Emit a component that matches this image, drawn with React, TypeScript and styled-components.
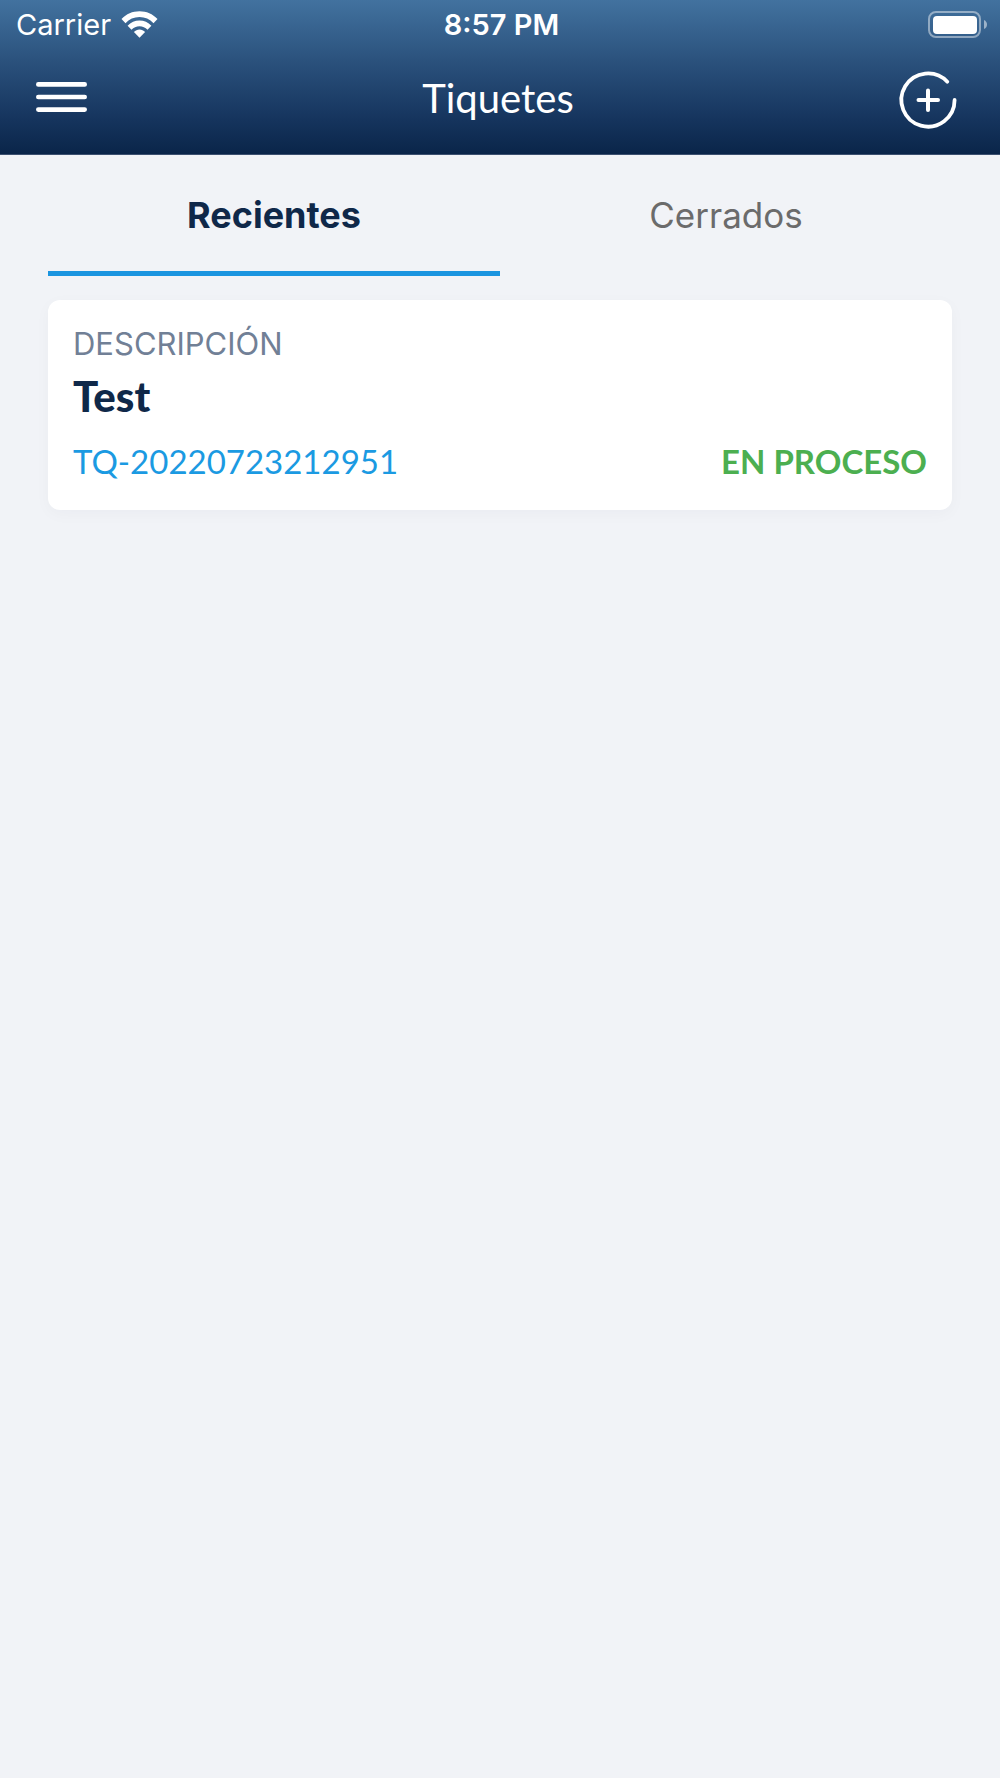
import React, { useState } from "react";
import styled, { createGlobalStyle } from "styled-components";

const system = `Inter, "Liberation Sans", sans-serif`;
const brand = `Lato, "Open Sans", sans-serif`;

const GlobalStyle = createGlobalStyle`
  *, *::before, *::after { box-sizing: border-box; }
  body {
    margin: 0;
    background: #f1f3f7;
    font-family: ${system};
  }
  button {
    margin: 0;
    padding: 0;
    border: 0;
    background: none;
    font: inherit;
    color: inherit;
    cursor: pointer;
  }
`;

const Screen = styled.div`
  min-height: 100vh;
  background: #f1f3f7;
`;

const Header = styled.header`
  color: #fff;
  background: linear-gradient(#42729f 0%, #2b527d 39%, #15345d 78%, #0a2549 100%);
  border-bottom: 1px solid #3c5070;
`;

const ThreeColumns = styled.div`
  display: grid;
  grid-template-columns: 1fr auto 1fr;
  align-items: center;
`;

const StatusBar = styled(ThreeColumns)`
  height: 50px;
  padding: 0 13px 0 16px;
  font-size: 29px;
  line-height: 36px;
`;

const NavBar = styled(ThreeColumns)`
  height: 104px;
  padding: 0 40px 4px 36px;
`;

const Slot = styled.div<{ $end?: boolean }>`
  display: flex;
  align-items: center;
  gap: 10px;
  justify-content: ${(p) => (p.$end ? "flex-end" : "flex-start")};
`;

const Time = styled.time`
  font-weight: 600;
`;

const Title = styled.h1`
  margin: 0;
  padding-bottom: 4px;
  font-family: ${brand};
  font-size: 40px;
  font-weight: 400;
  line-height: 48px;
`;

const IconButton = styled.button`
  display: flex;
  align-items: center;
  justify-content: center;
`;

const Icon = styled.svg`
  display: block;
  flex: none;
`;

const Content = styled.main`
  padding: 0 48px;
`;

const Tabs = styled.div`
  display: flex;
  margin-bottom: 24px;
`;

const Tab = styled.button<{ $active: boolean }>`
  flex: 1;
  height: 121px;
  padding-top: 3px;
  border-bottom: 5px solid ${(p) => (p.$active ? "#1b95e0" : "transparent")};
  color: ${(p) => (p.$active ? "#0f2849" : "#6b6b6b")};
  font-size: ${(p) => (p.$active ? 36 : 35)}px;
  font-weight: ${(p) => (p.$active ? 700 : 400)};
  line-height: 44px;
`;

const Card = styled.article`
  padding: 24px 25px;
  border-radius: 12px;
  background: #fff;
  box-shadow: 0 4px 16px rgba(20, 30, 60, 0.03);
`;

const Label = styled.p`
  margin: 0;
  color: #718096;
  font-size: 31px;
  line-height: 40px;
`;

const Description = styled.h2`
  margin: 8px 0 16px;
  color: #0f2849;
  font-family: ${brand};
  font-size: 42px;
  font-weight: 900;
  line-height: 48px;
`;

const CardFooter = styled.div`
  display: flex;
  align-items: baseline;
  justify-content: space-between;
  font-family: ${brand};
  font-size: 33px;
  line-height: 50px;
`;

const TicketNumber = styled.span`
  color: #1b9ae2;
`;

const Status = styled.span`
  color: #4caf50;
  font-weight: 700;
`;

const WifiIcon = () => (
  <Icon width="37" height="28" viewBox="0 0 37 28" fill="#fff" aria-hidden="true">
    <path d="M0.5 8C5.3 2.900 11.500 0.200 18.500 0.200S31.700 2.900 36.500 8L32.500 12.200C28.800 8.300 24 6.100 18.500 6.100S8.200 8.300 4.500 12.200Z" />
    <path d="M6.600 14.700C9.800 11.400 14 9.500 18.500 9.500S27.200 11.400 30.400 14.700L26.500 18.700C24.400 16.500 21.600 15.300 18.500 15.300S12.600 16.500 10.500 18.700Z" />
    <path d="M12.900 21C14.400 19.400 16.400 18.500 18.500 18.500S22.600 19.400 24.100 21L18.500 26.700Z" />
  </Icon>
);

const BatteryIcon = () => (
  <Icon width="59" height="28" viewBox="0 0 59 28" aria-hidden="true">
    <rect x="1" y="1" width="51" height="25" rx="7" fill="none" stroke="#fff" strokeOpacity="0.45" strokeWidth="2" />
    <rect x="5" y="5" width="44" height="18" rx="4" fill="#fff" />
    <path d="M56 9C58 10 59 11.500 59 13.500S58 17 56 18Z" fill="#fff" fillOpacity="0.5" />
  </Icon>
);

const MenuIcon = () => (
  <Icon width="51" height="38" viewBox="0 0 51 38" stroke="#fff" strokeWidth="4.600" strokeLinecap="round" aria-hidden="true">
    <path d="M2.300 3.400H48.700M2.300 16H48.700M2.300 28.600H48.700" />
  </Icon>
);

const AddIcon = () => (
  <Icon width="64" height="64" viewBox="0 0 64 64" fill="none" stroke="#fff" strokeWidth="3.800" strokeLinecap="round" aria-hidden="true">
    <path d="M58.600 32A26.600 26.600 0 1 1 51.300 13.700" />
    <path d="M32 22.500V42M22.500 32H42" strokeWidth="4" />
  </Icon>
);

const tabs = ["Recientes", "Cerrados"];

const tickets = [
  { id: "TQ-20220723212951", description: "Test", status: "EN PROCESO", tab: "Recientes" },
];

export default function App() {
  const [active, setActive] = useState(tabs[0]);

  return (
    <Screen>
      <GlobalStyle />
      <Header>
        <StatusBar>
          <Slot>
            <span>Carrier</span>
            <WifiIcon />
          </Slot>
          <Time>8:57 PM</Time>
          <Slot $end>
            <BatteryIcon />
          </Slot>
        </StatusBar>
        <NavBar as="nav">
          <Slot>
            <IconButton type="button" aria-label="Menú">
              <MenuIcon />
            </IconButton>
          </Slot>
          <Title>Tiquetes</Title>
          <Slot $end>
            <IconButton type="button" aria-label="Nuevo tiquete">
              <AddIcon />
            </IconButton>
          </Slot>
        </NavBar>
      </Header>
      <Content>
        <Tabs role="tablist">
          {tabs.map((name) => (
            <Tab
              key={name}
              type="button"
              role="tab"
              aria-selected={name === active}
              $active={name === active}
              onClick={() => setActive(name)}
            >
              {name}
            </Tab>
          ))}
        </Tabs>
        {tickets
          .filter((ticket) => ticket.tab === active)
          .map((ticket) => (
            <Card key={ticket.id}>
              <Label>DESCRIPCIÓN</Label>
              <Description>{ticket.description}</Description>
              <CardFooter>
                <TicketNumber>{ticket.id}</TicketNumber>
                <Status>{ticket.status}</Status>
              </CardFooter>
            </Card>
          ))}
      </Content>
    </Screen>
  );
}
